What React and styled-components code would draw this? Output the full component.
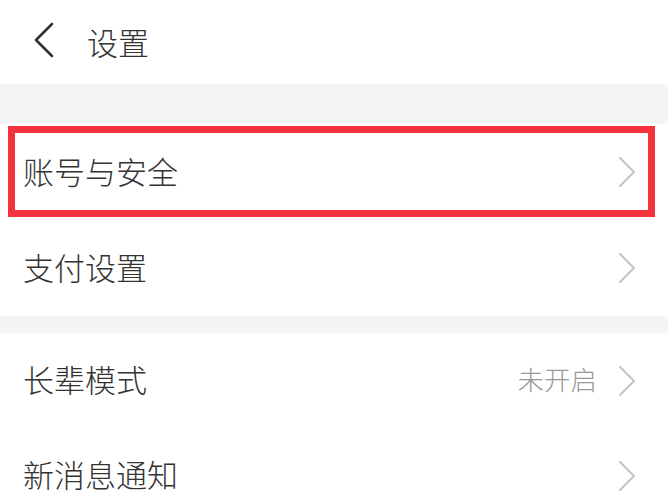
import React from "react";
import styled, { createGlobalStyle } from "styled-components";

const Global = createGlobalStyle`
  html, body { margin: 0; padding: 0; background: #ffffff; }
  body { font-family: "Noto Sans CJK SC", "Noto Sans", sans-serif; }
`;

const Page = styled.div`
  width: 668px;
  height: 500px;
  overflow: hidden;
  background: #ffffff;
  display: flex;
  flex-direction: column;
`;

const Header = styled.div`
  height: 84px;
  flex: none;
  display: flex;
  align-items: center;
  padding-left: 33px;
  box-sizing: border-box;
  gap: 32px;
`;

const Title = styled.div`
  font-size: 31px;
  font-weight: 300;
  color: #333333;
  line-height: 1;
  margin-top: -2px;
`;

const Gap = styled.div`
  flex: none;
  height: ${(p) => p.h}px;
  background: #f5f5f5;
`;

const Row = styled.div`
  position: relative;
  flex: none;
  height: ${(p) => p.h}px;
  display: flex;
  align-items: center;
  padding: 0 32px 0 23px;
  box-sizing: border-box;
  background: #ffffff;
`;

const Label = styled.div`
  flex: 1;
  font-size: 31px;
  font-weight: 300;
  color: #333333;
  line-height: 1;
  margin-top: -4px;
`;

const Value = styled.div`
  font-size: 26.5px;
  font-weight: 300;
  color: #999999;
  line-height: 1;
  margin-right: 21px;
  margin-top: -3px;
`;

const Highlight = styled.div`
  position: absolute;
  top: 2px;
  left: 8px;
  right: 13px;
  bottom: 3px;
  border: 7px solid #f5333f;
  pointer-events: none;
`;

const Back = () => (
  <svg width="22" height="36" viewBox="0 0 22 36" style={{ marginTop: -4 }}>
    <path d="M19 2 L3 18 L19 34" fill="none" stroke="#333333" strokeWidth="2.6" strokeLinecap="round" strokeLinejoin="round" />
  </svg>
);

const Chevron = () => (
  <svg width="18" height="32" viewBox="0 0 18 32">
    <path d="M2 2 L16 16 L2 30" fill="none" stroke="#c4c4c4" strokeWidth="2" strokeLinecap="round" strokeLinejoin="round" />
  </svg>
);

const items1 = [
  { label: "账号与安全", highlight: true, h: 96 },
  { label: "支付设置", h: 96 },
];
const items2 = [
  { label: "长辈模式", value: "未开启", h: 95 },
  { label: "新消息通知", h: 95 },
];

const Item = ({ label, value, highlight, h }) => (
  <Row h={h}>
    <Label>{label}</Label>
    {value && <Value>{value}</Value>}
    <Chevron />
    {highlight && <Highlight />}
  </Row>
);

export default function App() {
  return (
    <Page>
      <Global />
      <Header>
        <Back />
        <Title>设置</Title>
      </Header>
      <Gap h={40} />
      {items1.map((it) => (
        <Item key={it.label} {...it} />
      ))}
      <Gap h={17} />
      {items2.map((it) => (
        <Item key={it.label} {...it} />
      ))}
    </Page>
  );
}
